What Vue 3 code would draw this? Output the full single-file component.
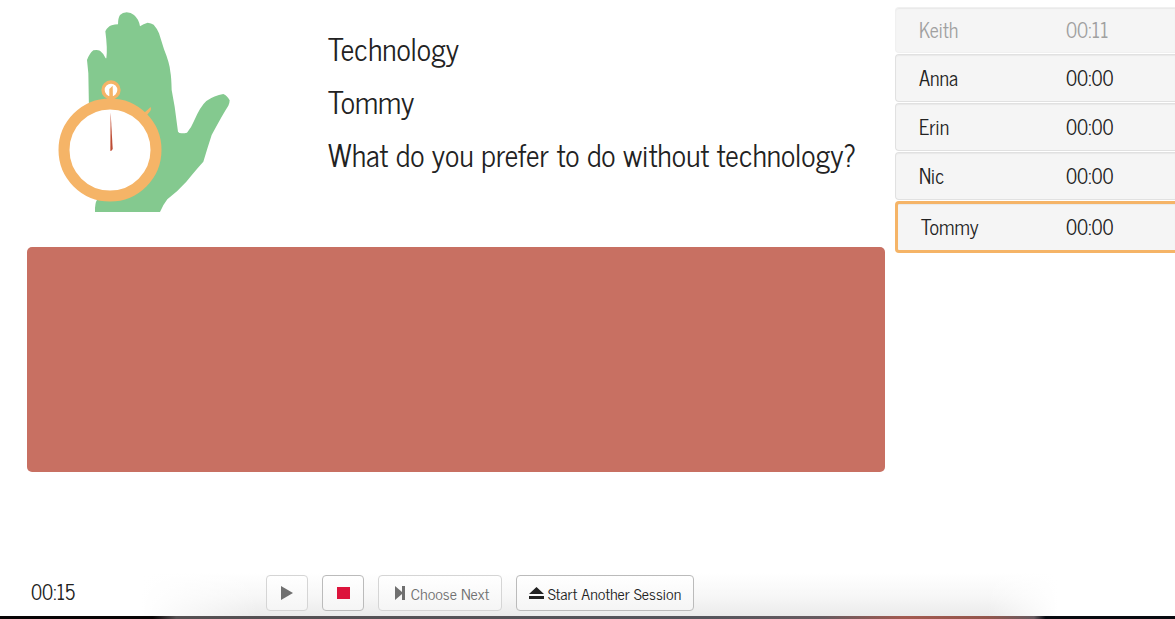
<script setup>
const prompts = ['Technology', 'Tommy', 'What do you prefer to do without technology?']
const people = [
  { name: 'Keith', time: '00:11', state: 'done' },
  { name: 'Anna', time: '00:00', state: '' },
  { name: 'Erin', time: '00:00', state: '' },
  { name: 'Nic', time: '00:00', state: '' },
  { name: 'Tommy', time: '00:00', state: 'current' },
]
</script>

<template>
  <div class="page">
    <div class="content">
      <main class="main">
        <section class="intro">
          <svg class="logo" viewBox="0 0 630 636" role="img" aria-label="Hand holding a stopwatch">
            <defs>
              <linearGradient id="needle" x1="0" x2="1" y1="0" y2="0">
                <stop offset="0.3" stop-color="#d98b78" />
                <stop offset="0.6" stop-color="#b8432c" />
              </linearGradient>
            </defs>
            <path
              fill="#84c98f"
              d="M147 330 L145 220 L141 180 Q148 161 160 151 Q171 148 180 152 Q191 160 197 175 L199 175 Q203 145 196 94 Q203 80 215 76 Q225 73 234 73 Q234 54 240 45 Q248 37 260 37 Q273 37 282 45 Q297 58 300 79 Q310 71 323 68 Q334 69 341 74 Q351 85 357 100 L372 148 Q389 190 391 215 Q394 230 395 270 L404 320 L414 395 Q417 400 425 400 Q435 400 441 398 Q454 383 462 363 Q481 319 499 303 Q523 286 550 282 Q562 287 569 301 Q569 309 565 317 Q548 343 515 405 Q503 442 490 485 Q469 508 439 545 Q412 575 382 598 Q368 616 360 636 L165 636 Q164 610 172 598 L147 500 Z"
            />
            <path fill="#f5b467" d="M307 343 Q323 330 332 321 Q335 329 331 333 L315 352 Z" />
            <circle cx="213" cy="270" r="24" fill="#fff" stroke="#f5b467" stroke-width="10" />
            <path fill="#f5b467" d="M208 300 L208 267 L218 257 L219 300 Z" />
            <circle cx="210" cy="450" r="138" fill="#fff" stroke="#f5b467" stroke-width="33" />
            <path fill="url(#needle)" d="M212 338 L218 447 Q214 455 210 452 L211 350 Z" />
          </svg>
          <div class="prompts">
            <h3 v-for="line in prompts" :key="line">{{ line }}</h3>
          </div>
        </section>
        <div class="panel"></div>
      </main>

      <aside class="people">
        <div v-for="p in people" :key="p.name" class="person" :class="p.state">
          <span class="name">{{ p.name }}</span>
          <span class="time">{{ p.time }}</span>
        </div>
      </aside>
    </div>

    <footer class="footer">
      <span class="clock">00:15</span>
      <div class="controls">
        <button class="icon" type="button" disabled aria-label="Play">
          <svg width="12" height="14" viewBox="0 0 12 14"><path d="M0 0 L12 7 L0 14 Z" fill="currentColor" /></svg>
        </button>
        <button class="icon" type="button" aria-label="Stop">
          <svg width="13" height="12" viewBox="0 0 13 12"><path d="M0 0 H13 V12 H0 Z" fill="#dc143c" /></svg>
        </button>
        <button class="next" type="button" disabled>
          <svg width="10" height="14" viewBox="0 0 10 14"><path d="M0 0 L7 6 V0 H10 V14 H7 V8 L0 14 Z" fill="currentColor" /></svg>
          <span class="label">Choose Next</span>
        </button>
        <button class="restart" type="button">
          <svg width="15" height="12" viewBox="0 0 15 12"><path d="M7.500 0 L15 7 H0 Z M0 9 H15 V12 H0 Z" fill="currentColor" /></svg>
          <span class="label">Start Another Session</span>
        </button>
      </div>
    </footer>
    <div class="dock"></div>
  </div>
</template>

<style>
body {
  margin: 0;
  background: #fff;
  overflow: hidden;
}
</style>

<style scoped>
.page {
  display: flex;
  flex-direction: column;
  min-height: 100vh;
  color: #222;
  font-family: "News Cycle", "Roboto Condensed", Roboto, "Liberation Sans", sans-serif;
  font-size: 20px;
  line-height: 24px;
}
.content {
  display: flex;
  flex: 1;
  gap: 10px;
  padding-left: 27px;
}
.main {
  flex: 1;
  min-width: 0;
}
.intro {
  display: flex;
  height: 247px;
}
.logo {
  flex: none;
  width: 210px;
  height: 212px;
  margin: 0 78px 0 13px;
}
.prompts {
  padding-top: 32px;
}
h3 {
  margin: 0 0 20px;
  font-size: 30px;
  line-height: 33px;
  font-weight: 400;
  white-space: nowrap;
}
.panel {
  height: 225px;
  border-radius: 5px;
  background: #c87062;
}
.people {
  display: flex;
  flex-direction: column;
  gap: 1px;
  width: 280px;
  padding-top: 7px;
}
.person {
  box-sizing: border-box;
  display: flex;
  align-items: center;
  height: 48px;
  padding-left: 23px;
  border: 1px solid #e1e1e1;
  border-right: 0;
  border-radius: 4px 0 0 4px;
  background: #f5f5f5;
  box-shadow: inset 0 1px 1px rgba(0, 0, 0, 0.05);
}
.name {
  flex: 1;
}
.time {
  width: 109px;
}
.done {
  height: 46px;
  color: #a0a0a0;
  border-color: #f0f0f0;
}
.current {
  height: 52px;
  border: 3px solid #f5b467;
  border-right: 0;
}
.footer {
  display: flex;
  align-items: center;
  box-sizing: border-box;
  height: 51px;
  padding: 5px 0 0 31px;
  background: linear-gradient(90deg, #fff 12%, transparent 22%, transparent 84%, #fff 90%), linear-gradient(#fff 15%, #f7f7f7 60%, #ebebeb);
}
.clock {
  width: 235px;
  padding-bottom: 2px;
}
.controls {
  display: flex;
  gap: 14px;
}
button {
  display: flex;
  align-items: center;
  justify-content: center;
  gap: 6px;
  box-sizing: border-box;
  height: 36px;
  padding: 0;
  border: 1px solid #bbb;
  border-radius: 4px;
  background: linear-gradient(#fff, #f5f5f5);
  color: #222;
  font-family: inherit;
  font-size: 16px;
  line-height: 20px;
  white-space: nowrap;
}
button svg {
  flex: none;
}
button:disabled {
  border-color: #d5d5d5;
  color: #707070;
}
.icon {
  width: 42px;
}
.next {
  width: 124px;
  padding-left: 4px;
}
.restart {
  width: 178px;
  gap: 4px;
}
.dock {
  height: 3px;
  background: linear-gradient(90deg, #080405 0 13%, #555052 15%, #55555c 60%, #675b60 70%, #a35a50 77%, #94564c 84%, #675b60 88%, #080a10 89%);
}
</style>
